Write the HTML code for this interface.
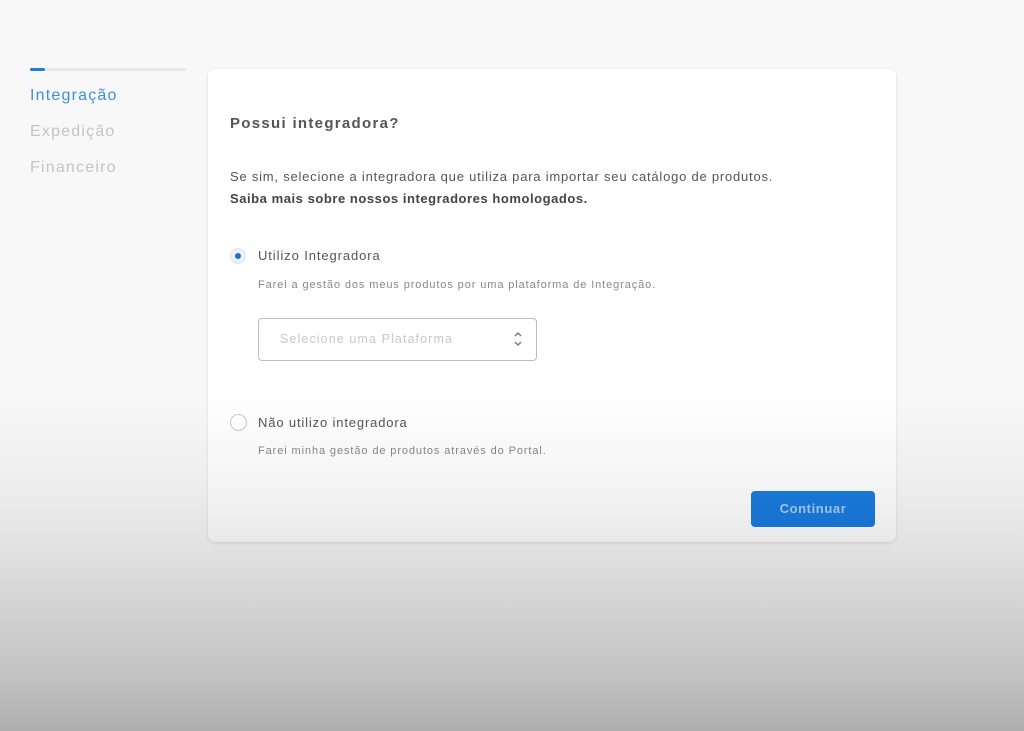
<!DOCTYPE html>
<html><head><meta charset="utf-8"><style>
html,body{margin:0;padding:0}
body{width:1024px;height:731px;position:relative;overflow:hidden;background:#f8f8f9;font-family:"Liberation Sans",sans-serif;}
.abs{position:absolute}
.bar{left:30px;top:68px;width:156px;height:3px;background:#e8e8ea;border-radius:2px}
.bar i{position:absolute;left:0;top:0;width:15px;height:3px;background:#1e7de0;border-radius:2px}
.nav{left:30px;font-size:16px;color:#c4c4c6;letter-spacing:1.2px}
.card{left:208px;top:69px;width:688px;height:473px;background:#fff;border-radius:7px;box-shadow:0 1px 3px rgba(0,0,0,0.12)}
.t{color:#444;white-space:nowrap}
.btn{left:751px;top:491px;width:124px;height:36px;background:#1a7ce0;border-radius:4px;color:#a9cdf2;font-weight:bold;font-size:13px;text-align:center;line-height:36px;letter-spacing:0.6px}
.sel{left:258px;top:318px;width:279px;height:43px;border:1.5px solid #bdbdbd;border-radius:4px;box-sizing:border-box}
.overlay{left:0;top:0;width:1024px;height:731px;background:linear-gradient(to bottom,rgba(0,0,0,0) 0,rgba(0,0,0,0) 390px,rgba(0,0,0,0.04) 480px,rgba(0,0,0,0.1) 560px,rgba(0,0,0,0.22) 680px,rgba(0,0,0,0.3) 731px);pointer-events:none}
</style></head><body>
<div class="abs bar"><i></i></div>
<div class="abs nav" style="top:87px;color:#3e8fe0">Integração</div>
<div class="abs nav" style="top:123px">Expedição</div>
<div class="abs nav" style="top:159px">Financeiro</div>
<div class="abs card"></div>
<div class="abs t" style="left:230px;top:115px;font-size:15px;font-weight:bold;color:#555;letter-spacing:1.3px">Possui integradora?</div>
<div class="abs t" style="left:230px;top:169px;font-size:13px;color:#555;letter-spacing:0.78px">Se sim, selecione a integradora que utiliza para importar seu catálogo de produtos.</div>
<div class="abs t" style="left:230px;top:191px;font-size:13px;font-weight:bold;color:#444;letter-spacing:0.55px">Saiba mais sobre nossos integradores homologados.</div>
<div class="abs" style="left:230px;top:248px;width:16px;height:16px;border-radius:50%;background:#eef2f8;border:1px solid #e0e4ea;box-sizing:border-box"></div>
<div class="abs" style="left:235px;top:253px;width:6px;height:6px;border-radius:50%;background:#1a6fe0"></div>
<div class="abs t" style="left:258px;top:248px;font-size:13px;color:#555;letter-spacing:0.9px">Utilizo Integradora</div>
<div class="abs t" style="left:258px;top:279px;font-size:11px;color:#888;letter-spacing:0.9px">Farei a gestão dos meus produtos por uma plataforma de Integração.</div>
<div class="abs sel"></div>
<div class="abs t" style="left:280px;top:332px;font-size:12.5px;color:#c8c8c8;letter-spacing:1.1px">Selecione uma Plataforma</div>
<svg class="abs" style="left:512px;top:330px" width="12" height="18" viewBox="0 0 12 18"><path d="M3 6 L6 3 L9 6 M3 12 L6 15 L9 12" fill="none" stroke="#777" stroke-width="1.4"/></svg>
<div class="abs" style="left:230px;top:414px;width:17px;height:17px;border-radius:50%;border:1.5px solid #c8c8c8;box-sizing:border-box"></div>
<div class="abs t" style="left:258px;top:415px;font-size:13px;color:#555;letter-spacing:0.85px">Não utilizo integradora</div>
<div class="abs t" style="left:258px;top:445px;font-size:11px;color:#888;letter-spacing:0.9px">Farei minha gestão de produtos através do Portal.</div>
<div class="abs btn">Continuar</div>
<div class="abs overlay"></div>
</body></html>
